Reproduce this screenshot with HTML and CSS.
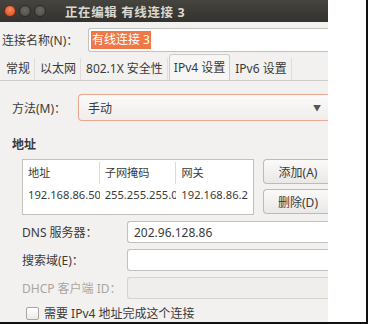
FILE: index.html
```html
<!DOCTYPE html>
<html lang="zh-CN">
<head>
  <meta charset="UTF-8" />
  <title>正在编辑 有线连接 3</title>
  <link rel="stylesheet" href="styles.css">
</head>
<body>
  <div class="frame">
    <div class="dialog">

      <div class="titlebar">
        <div class="wbtn close"></div>
        <div class="wbtn"></div>
        <div class="wbtn"></div>
        <div class="title">正在编辑 有线连接 3</div>
      </div>

      <div class="name-row">
        <div class="label">连接名称(N)：</div>
        <div class="entry name-entry"><span class="sel">有线连接 3</span></div>
      </div>

      <div class="tabs">
        <div class="tab">常规</div>
        <div class="tab">以太网</div>
        <div class="tab">802.1X 安全性</div>
        <div class="tab active">IPv4 设置</div>
        <div class="tab">IPv6 设置</div>
      </div>

      <div class="page">
        <div class="method-row">
          <div class="label">方法(M)：</div>
          <div class="combo">
            <span>手动</span>
            <span class="arrow">▼</span>
          </div>
        </div>

        <div class="heading">地址</div>

        <div class="addr-row">
          <div class="table">
            <div class="trow thead">
              <div class="cell">地址</div>
              <div class="cell">子网掩码</div>
              <div class="cell">网关</div>
            </div>
            <div class="trow">
              <div class="cell">192.168.86.50</div>
              <div class="cell">255.255.255.0</div>
              <div class="cell">192.168.86.2</div>
            </div>
          </div>
          <div class="btns">
            <div class="btn">添加(A)</div>
            <div class="btn">删除(D)</div>
          </div>
        </div>

        <div class="form">
          <div class="label">DNS 服务器：</div>
          <div class="entry">202.96.128.86</div>
          <div class="label">搜索域(E)：</div>
          <div class="entry"></div>
          <div class="label dim">DHCP 客户端 ID：</div>
          <div class="entry disabled"></div>
        </div>

        <div class="check-row">
          <div class="checkbox"></div>
          <div>需要 IPv4 地址完成这个连接</div>
        </div>
      </div>

    </div>
  </div>
</body>
</html>
```

FILE: styles.css
```css
body {
  margin: 0;
  background-color: #fff;
  font-family: "Noto Sans", "Noto Sans CJK SC", sans-serif;
  font-size: 12px;
  color: #3a3a3a;
}

.frame {
  width: 366px;
  height: 322px;
  border-right: 2px solid #111;
  border-bottom: 2px solid #111;
  background-color: #fff;
  overflow: hidden;
}

.dialog {
  width: 328px;
  height: 322px;
  background-color: #f2f1f0;
  overflow: hidden;
}

.titlebar {
  height: 22px;
  background: linear-gradient(#45443f, #33322e);
  display: flex;
  align-items: center;
  padding-left: 4px;
  gap: 3px;
}

.wbtn {
  width: 10px;
  height: 10px;
  border-radius: 50%;
  background: radial-gradient(circle at 50% 40%, #6a6964, #4a4944);
  border: 1px solid #2a2925;
}

.wbtn.close {
  background: radial-gradient(circle at 50% 35%, #f58a5a, #d9471b);
  border-color: #6b2a12;
}

.title {
  margin-left: 16px;
  color: #dcd8cf;
  font-weight: bold;
  font-size: 12.5px;
  letter-spacing: 0.6px;
}

.name-row {
  display: flex;
  align-items: center;
  height: 24px;
  margin-top: 6px;
  padding-left: 2px;
}

.name-row .label {
  width: 86px;
}

.entry {
  background-color: #fff;
  border: 1px solid #c3c1bd;
  border-radius: 3px;
  box-sizing: border-box;
  height: 22px;
  display: flex;
  align-items: center;
  padding-left: 6px;
  color: #3a3a3a;
}

.name-entry {
  flex: 1;
  height: 24px;
  border-right: none;
  border-radius: 3px 0 0 3px;
  padding-left: 2px;
}

.sel {
  background-color: #f07746;
  color: #fff;
  padding: 1px 1px;
  line-height: 16px;
}

.tabs {
  display: flex;
  align-items: flex-end;
  height: 24px;
  margin-top: 4px;
  padding-left: 2px;
  border-bottom: 1px solid #cfcdc9;
}

.tab {
  padding: 0 4px;
  height: 22px;
  line-height: 22px;
  margin-right: 1px;
  border-right: 1px solid #e0deda;
}

.tab.active {
  background-color: #f7f6f5;
  border: 1px solid #cfcdc9;
  border-bottom: none;
  border-radius: 3px 3px 0 0;
  height: 25px;
  line-height: 25px;
}

.page {
  padding: 13px 0 0 12px;
}

.method-row {
  display: flex;
  align-items: center;
  height: 27px;
}

.method-row .label {
  width: 66px;
}

.combo {
  flex: 1;
  height: 27px;
  box-sizing: border-box;
  border: 1px solid #e8a890;
  border-right: none;
  border-radius: 4px 0 0 4px;
  background: linear-gradient(#fbfaf9, #efeeec);
  display: flex;
  align-items: center;
  justify-content: space-between;
  padding: 0 7px 0 9px;
}

.arrow {
  font-size: 8px;
  color: #555;
}

.heading {
  font-weight: bold;
  margin-top: 16px;
  height: 16px;
  line-height: 16px;
}

.addr-row {
  display: flex;
  margin-top: 6px;
  padding-left: 10px;
  gap: 9px;
}

.table {
  width: 232px;
  height: 56px;
  box-sizing: border-box;
  background-color: #fff;
  border: 1px solid #c3c1bd;
}

.trow {
  display: flex;
  height: 19px;
  align-items: center;
}

.thead {
  height: 24px;
  padding-top: 1px;
}

.cell {
  width: 80px;
  padding-left: 5px;
  box-sizing: border-box;
  font-size: 11.2px;
  white-space: nowrap;
  overflow: hidden;
}

.thead .cell {
  border-right: 1px solid #dcdad6;
  height: 22px;
  line-height: 22px;
}

.thead .cell:last-child {
  border-right: none;
}

.btns {
  flex: 1;
  display: flex;
  flex-direction: column;
  gap: 5px;
}

.btn {
  height: 25px;
  box-sizing: border-box;
  border: 1px solid #bdbbb7;
  border-right: none;
  border-radius: 4px 0 0 4px;
  background: linear-gradient(#fbfaf9, #e9e8e6);
  display: flex;
  align-items: center;
  justify-content: center;
  padding-left: 4px;
}

.form {
  display: grid;
  grid-template-columns: 105px 1fr;
  row-gap: 6px;
  align-items: center;
  margin-top: 6px;
  padding-left: 10px;
}

.form .entry {
  border-right: none;
  border-radius: 3px 0 0 3px;
  height: 22px;
}

.form .entry.disabled {
  background-color: #efeeec;
  border-color: #d6d4d0;
}

.dim {
  color: #a8a6a2;
}

.check-row {
  display: flex;
  align-items: center;
  gap: 5px;
  margin-top: 5px;
  padding-left: 14px;
}

.checkbox {
  width: 11px;
  height: 11px;
  border: 1px solid #a8a6a2;
  border-radius: 2px;
  background: linear-gradient(#fff, #eceae8);
}
```
